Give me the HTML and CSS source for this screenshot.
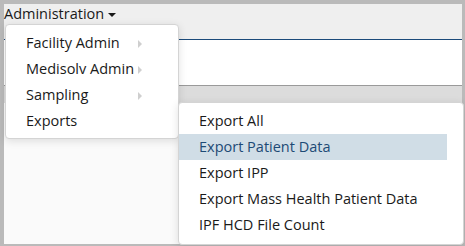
FILE: index.html
```html
<!DOCTYPE html>
<html lang="en">
<head>
    <meta charset="UTF-8">
    <title>Administration</title>
    <link rel="stylesheet" href="styles.css">
</head>
<body>
    <div class="frame">
        <div class="app">
            <div class="header">
                <span class="nav-toggle">Administration<span class="caret"></span></span>
            </div>
            <div class="content"></div>
            <div class="toolbar"></div>
            <div class="main"></div>
        </div>

        <ul class="menu menu-main">
            <li class="has-sub">Facility Admin<span class="arrow"></span></li>
            <li class="has-sub">Medisolv Admin<span class="arrow"></span></li>
            <li class="has-sub">Sampling<span class="arrow"></span></li>
            <li>Exports</li>
        </ul>

        <ul class="menu menu-sub">
            <li>Export All</li>
            <li class="active">Export Patient Data</li>
            <li>Export IPP</li>
            <li>Export Mass Health Patient Data</li>
            <li>IPF HCD File Count</li>
        </ul>
    </div>
</body>
</html>
```

FILE: styles.css
```css
body {
    margin: 0;
    font-family: "Open Sans", Arial, sans-serif;
    font-size: 14.5px;
    color: #1a1a1a;
    background-color: #bababa;
}
.frame {
    position: relative;
    height: 246px;
    padding: 4px 3px 2px 4px;
    box-sizing: border-box;
}
.app {
    display: flex;
    flex-direction: column;
    height: 100%;
    background-color: #fafafa;
}
.header {
    height: 35px;
    background-color: #efefef;
    border-bottom: 1px solid #1b4a7a;
}
.nav-toggle {
    display: inline-block;
    line-height: 20px;
}
.caret {
    display: inline-block;
    margin-left: 4px;
    vertical-align: middle;
    border-top: 4px solid #1a1a1a;
    border-left: 4px solid transparent;
    border-right: 4px solid transparent;
}
.content {
    height: 45px;
    background-color: #fff;
    border-bottom: 1px solid #9a9a9a;
}
.toolbar {
    height: 17px;
    background-color: #dcdcdc;
}
.main {
    flex: 1;
}
.menu {
    position: absolute;
    margin: 0;
    list-style: none;
    background-color: #fff;
    border: 1px solid #d4d4d4;
    border-radius: 4px;
    box-shadow: 0 2px 8px rgba(0, 0, 0, 0.12);
}
.menu li {
    position: relative;
    height: 26px;
    line-height: 26px;
    white-space: nowrap;
}
.menu-main {
    left: 5px;
    top: 24px;
    width: 152px;
    padding: 5px 0 4px 20px;
}
.arrow {
    position: absolute;
    left: 112px;
    top: 10px;
    border-left: 4px solid #cfcfcf;
    border-top: 4px solid transparent;
    border-bottom: 4px solid transparent;
}
.menu-sub {
    left: 178px;
    top: 102px;
    width: 284px;
    padding: 5px 0 6px 0;
}
.menu-sub li {
    margin-right: 16px;
    padding-left: 20px;
}
.menu-sub li.active {
    background-color: #d0dde6;
    color: #1d4a75;
}
```
